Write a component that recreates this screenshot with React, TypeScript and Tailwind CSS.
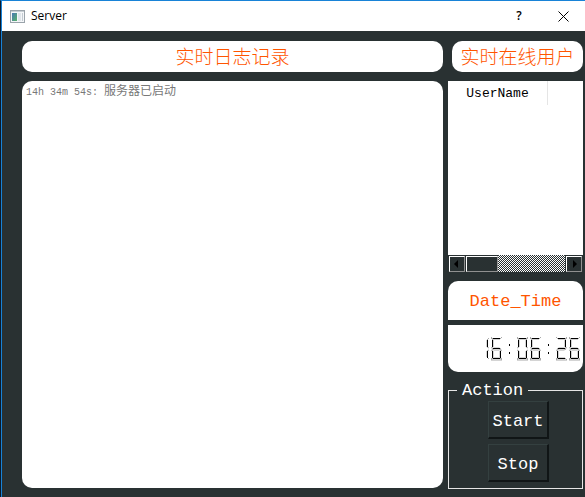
import React from "react";

const CJK = "font-['Liberation_Mono','Noto_Sans_CJK_SC',monospace]";

// Which of the seven segments are lit for each digit: a top, b upper right,
// c lower right, d bottom, e lower left, f upper left, g middle.
const SEGMENTS: Record<string, string> = {
  "0": "abcdef",
  "1": "bc",
  "2": "abdeg",
  "3": "abcdg",
  "4": "bcfg",
  "5": "acdfg",
  "6": "acdefg",
  "7": "abc",
  "8": "abcdefg",
  "9": "abcdfg",
};

// Each segment is a grey bevel with a black core line.
const SHAPES: Record<string, { bevel: string; core: string }> = {
  a: { bevel: "M0 0L2 2H9L11 0", core: "M2 1H9V2H2Z" },
  b: { bevel: "M11 1L9 3V10L11 11", core: "M9 3H10V10H9Z" },
  c: { bevel: "M11 13L9 14V20L11 22", core: "M9 14H10V21H9Z" },
  d: { bevel: "M0 23L2 21H9L11 23Z", core: "M2 21H9V22H2Z" },
  e: { bevel: "M0 13L2 14V20L0 22", core: "M1 14H2V21H1Z" },
  f: { bevel: "M0 1L2 3V10L0 11", core: "M1 3H2V10H1Z" },
  g: { bevel: "M1 12L3 11H8L10 12L8 13H3Z", core: "M2 11H9V12H2Z" },
};

function Lcd({ value }: { value: string }) {
  return (
    <svg
      role="img"
      aria-label={value}
      width={value.length * 13}
      height="24"
      viewBox={`0 0 ${value.length * 13} 24`}
    >
      {value.split("").map((ch, i) => (
        <g key={i} transform={`translate(${i * 13} 0)`}>
          {ch === ":" ? (
            <path d="M5 7h1v2h-1zM5 15h1v2h-1z" fill="#000" />
          ) : (
            SEGMENTS[ch].split("").map((s) => (
              <g key={s}>
                <path d={SHAPES[s].bevel} fill="none" stroke="#a0a0a0" strokeWidth="0.9" />
                <path d={SHAPES[s].core} fill="#000" />
              </g>
            ))
          )}
        </g>
      ))}
    </svg>
  );
}

function ScrollButton({ label, d }: { label: string; d: string }) {
  return (
    <button
      type="button"
      aria-label={label}
      className="flex h-4 w-4 shrink-0 items-center justify-center border border-t-white border-l-white border-r-[#909090] border-b-[#909090] bg-[#293132]"
    >
      <svg width="8" height="8" viewBox="0 0 8 8" fill="#000">
        <path d={d} />
      </svg>
    </button>
  );
}

function ActionButton({ children }: { children: React.ReactNode }) {
  return (
    <button
      type="button"
      className="h-[38px] w-[61px] border-t border-l border-r-2 border-b-2 border-t-[#344040] border-l-[#344040] border-r-[#101516] border-b-[#101516] bg-[#293132] pt-1 text-[17px] text-white"
    >
      {children}
    </button>
  );
}

export default function App() {
  return (
    <div
      className={`flex min-h-screen flex-col border-t border-t-[#1883d7] border-l border-l-[#0b1a2b] bg-[#293132] ${CJK}`}
    >
      <header className="flex h-[30px] items-center border-l border-[#1883d7] bg-white pr-4 pl-2">
        <svg width="15" height="13" viewBox="0 0 15 13" aria-hidden="true">
          <defs>
            <linearGradient id="pane" x1="0" y1="0" x2="1" y2="1">
              <stop offset="0" stopColor="#4a78b5" />
              <stop offset="1" stopColor="#58b368" />
            </linearGradient>
          </defs>
          <rect x="0.5" y="0.5" width="14" height="12" fill="#f4f6f8" stroke="#9aa3aa" />
          <path d="M1 1.5H14" stroke="#c6cdd3" />
          <rect x="2" y="3" width="5" height="8" fill="url(#pane)" />
          <rect x="8" y="3" width="3" height="8" fill="#dfe5ea" />
          <rect x="12" y="3" width="1" height="8" fill="#c3cbd2" />
        </svg>
        <h1 className="ml-[6px] flex-1 font-['Open_Sans',sans-serif] text-[12px] leading-4 text-black">Server</h1>
        <button type="button" aria-label="Help" className="mr-8 w-3 font-['Open_Sans',sans-serif] text-[12px] leading-4 font-semibold text-black">
          ?
        </button>
        <button type="button" aria-label="Close" className="flex h-4 w-3 items-center justify-center">
          <svg width="11" height="11" viewBox="0 0 11 11" stroke="#000" strokeWidth="1">
            <path d="M.5.5l10 10M10.5.5l-10 10" />
          </svg>
        </button>
      </header>

      <main className="flex flex-1 gap-[5px] border-l border-[#1883d7] pt-[10px] pr-[2px] pb-2 pl-5">
        <section className="flex flex-1 flex-col gap-[9px] pb-px">
          <h2 className="flex h-[31px] items-center justify-center rounded-[10px] bg-white pb-[2px] font-['Noto_Sans_CJK_SC',sans-serif] text-[19px] leading-6 font-light text-[#ff5500]">
            实时日志记录
          </h2>
          <div role="log" className="flex-1 rounded-[10px] bg-white px-1 py-[3px] text-[10px] leading-4 text-[#787878]">
            14h 34m 54s: <span className="text-[12px]">服务器已启动</span>
          </div>
        </section>

        <aside className="flex w-[135px] shrink-0 flex-col">
          <h2 className="ml-1 flex h-[31px] items-center justify-center rounded-[10px] bg-white pb-[2px] font-['Noto_Sans_CJK_SC',sans-serif] text-[19px] leading-6 font-light text-[#ff5500]">
            实时在线用户
          </h2>

          <div className="mt-[9px] flex flex-1 flex-col bg-white">
            <div className="flex-1">
              <table className="w-[100px] border-collapse">
                <thead>
                  <tr>
                    <th scope="col" className="h-6 border-r border-[#e5e5e5] p-0 pt-[2px] text-center text-[13px] leading-4 font-normal text-black">
                      UserName
                    </th>
                  </tr>
                </thead>
              </table>
            </div>
            <div className="flex h-[17px] items-end gap-px bg-[#293132] px-px">
              <ScrollButton label="Scroll left" d="M5 0v8L1 4z" />
              <div className="flex h-full flex-1 items-end bg-[repeating-conic-gradient(#fff_0_25%,#293132_0_50%)] bg-[length:2px_2px]">
                <div className="h-full w-8 bg-[#293132] pt-px">
                  <div className="h-4 border border-t-white border-l-white border-r-[#909090] border-b-[#909090]" />
                </div>
              </div>
              <ScrollButton label="Scroll right" d="M3 0v8l4-4z" />
            </div>
          </div>

          <h2 className="mt-[9px] flex h-[39px] items-center justify-center rounded-t-[10px] bg-white pt-[2px] text-[17px] leading-6 text-[#ff5500]">
            Date_Time
          </h2>
          <div className="mt-[5px] flex h-[47px] items-center justify-end rounded-b-[10px] bg-white pr-px">
            <Lcd value="16:06:26" />
          </div>

          <fieldset className="mt-[7px] flex flex-col items-center gap-[5px] border border-[#e6e6e6] pb-[6px] pl-[6px]">
            <legend className="ml-[2px] h-[22px] px-[5px] text-[17px] leading-6 text-white">Action</legend>
            <ActionButton>Start</ActionButton>
            <ActionButton>Stop</ActionButton>
          </fieldset>
        </aside>
      </main>
    </div>
  );
}
